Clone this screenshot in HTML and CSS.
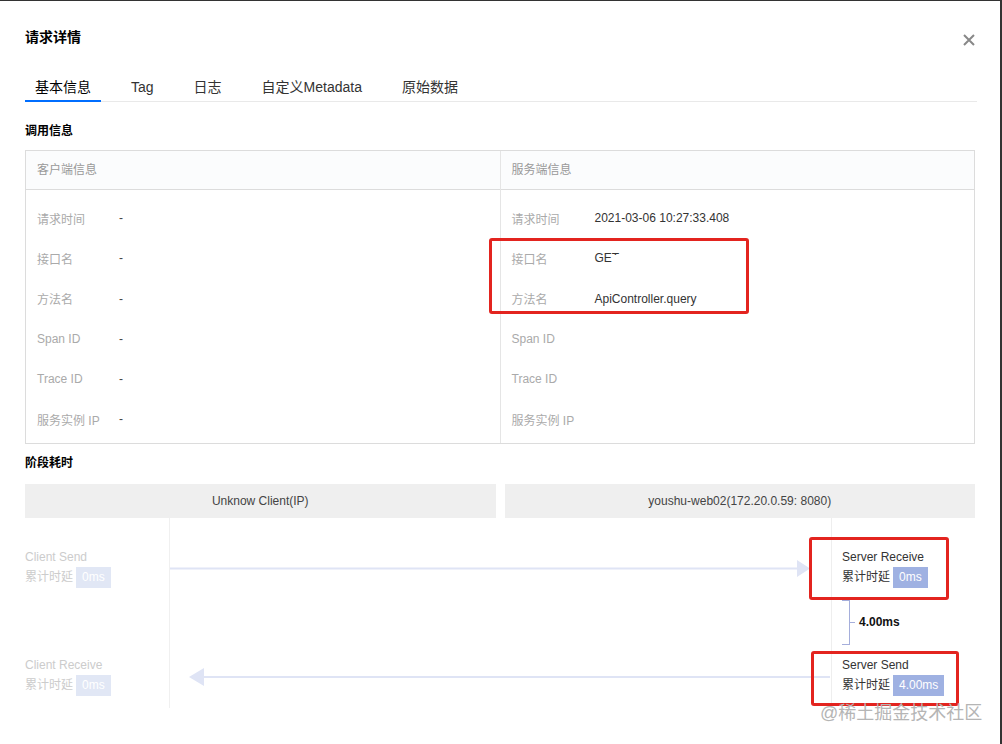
FILE: index.html
```html
<!DOCTYPE html>
<html lang="zh-CN">
<head>
<meta charset="UTF-8">
<meta name="viewport" content="width=device-width, initial-scale=1.0">
<title>请求详情</title>
<link rel="stylesheet" href="styles.css">
</head>
<body>
<div class="dialog">
  <div class="dialog_head">
    <h2 class="dialog_title">请求详情</h2>
    <a href="#" class="close" aria-label="关闭">
      <svg width="12" height="12" viewBox="0 0 12 12"><path d="M1 1 L11 11 M11 1 L1 11" stroke="#888" stroke-width="2" fill="none"/></svg>
    </a>
  </div>

  <ul class="tabs">
    <li class="on">基本信息</li>
    <li>Tag</li>
    <li>日志</li>
    <li>自定义Metadata</li>
    <li>原始数据</li>
  </ul>

  <h3 class="sub_title sub_first">调用信息</h3>
  <div class="info_table">
    <div class="info_col">
      <div class="info_head">客户端信息</div>
      <ul class="info_body">
        <li><span class="lbl">请求时间</span><span class="val">-</span></li>
        <li><span class="lbl">接口名</span><span class="val">-</span></li>
        <li><span class="lbl">方法名</span><span class="val">-</span></li>
        <li><span class="lbl">Span ID</span><span class="val">-</span></li>
        <li><span class="lbl">Trace ID</span><span class="val">-</span></li>
        <li><span class="lbl">服务实例 IP</span><span class="val">-</span></li>
      </ul>
    </div>
    <div class="info_col">
      <div class="info_head">服务端信息</div>
      <ul class="info_body">
        <li><span class="lbl">请求时间</span><span class="val">2021-03-06 10:27:33.408</span></li>
        <li><span class="lbl">接口名</span><span class="val">GET</span></li>
        <li><span class="lbl">方法名</span><span class="val">ApiController.query</span></li>
        <li><span class="lbl">Span ID</span><span class="val"></span></li>
        <li><span class="lbl">Trace ID</span><span class="val"></span></li>
        <li><span class="lbl">服务实例 IP</span><span class="val"></span></li>
      </ul>
    </div>
  </div>

  <h3 class="sub_title sub_second">阶段耗时</h3>
  <div class="stage_head">
    <div class="stage_bar">Unknow Client(IP)</div>
    <div class="stage_bar">youshu-web02(172.20.0.59: 8080)</div>
  </div>

  <div class="timeline">
    <div class="tl_side tl_client">
      <div class="evt">
        <p>Client Send</p>
        <p>累计时延<span class="badge">0ms</span></p>
      </div>
      <div class="evt evt_last">
        <p>Client Receive</p>
        <p>累计时延<span class="badge">0ms</span></p>
      </div>
    </div>
    <div class="tl_mid">
      <svg width="660" height="190" viewBox="0 0 660 190">
        <line x1="0" y1="50.5" x2="628" y2="50.5" stroke="#dfe4f5" stroke-width="2"/>
        <polygon points="627,42 640,50.5 627,59" fill="#dfe4f5"/>
        <line x1="34" y1="159" x2="660" y2="159" stroke="#dfe4f5" stroke-width="2"/>
        <polygon points="34,150 19,159 34,168" fill="#dfe4f5"/>
      </svg>
    </div>
    <div class="tl_side tl_server">
      <div class="evt">
        <p>Server Receive</p>
        <p>累计时延<span class="badge">0ms</span></p>
      </div>
      <div class="gap">
        <span class="bracket"></span>
        <b>4.00ms</b>
      </div>
      <div class="evt">
        <p>Server Send</p>
        <p>累计时延<span class="badge">4.00ms</span></p>
      </div>
    </div>
  </div>

  <!-- 标注框 -->
  <div class="mark mark_api"></div>
  <div class="mark mark_recv"></div>
  <div class="mark mark_send"></div>
  <div class="watermark">@稀土掘金技术社区</div>
</div>
</body>
</html>
```

FILE: styles.css
```css
* {
  margin: 0;
  padding: 0;
  box-sizing: border-box;
}
li {
  list-style: none;
}
body {
  background: #fff;
  font-family: "Liberation Sans", "Noto Sans CJK SC", sans-serif;
  font-size: 12px;
  color: #333;
}
.dialog {
  position: relative;
  width: 1002px;
  height: 744px;
  padding: 26px 25px 0 25px;
  border-top: 1px solid #333;
  border-right: 2px solid #333;
  overflow: hidden;
}
.dialog_head {
  display: flex;
  justify-content: space-between;
  align-items: center;
  height: 20px;
}
.dialog_title {
  font-size: 14px;
  line-height: 20px;
  font-weight: bold;
  color: #000;
}
.close {
  display: block;
  width: 12px;
  height: 12px;
  margin-top: 6px;
}
.close svg {
  display: block;
}

/* tabs */
.tabs {
  display: flex;
  margin-top: 30px;
  border-bottom: 1px solid #e9e9e9;
  width: 952px;
}
.tabs li {
  padding: 0 10px 3px;
  margin-right: 20px;
  margin-bottom: -1px;
  font-size: 14px;
  line-height: 20px;
  color: #333;
  border-bottom: 2px solid transparent;
}
.tabs li.on {
  color: #000;
  border-bottom-color: #006eff;
}

.sub_title {
  font-size: 12px;
  line-height: 20px;
  font-weight: bold;
  color: #000;
}
.sub_first {
  margin-top: 19px;
}
.sub_second {
  margin-top: 9px;
}

/* info table */
.info_table {
  display: flex;
  margin-top: 9px;
  border: 1px solid #dcdcdc;
}
.info_col {
  flex: 1;
}
.info_col + .info_col {
  border-left: 1px solid #e5e5e5;
}
.info_head {
  height: 39px;
  line-height: 39px;
  padding-left: 11px;
  color: #999;
  background: #fbfcfd;
  border-bottom: 1px solid #dcdcdc;
}
.info_body {
  padding: 8px 0 3px 11px;
}
.info_body li {
  display: flex;
  height: 40.25px;
  align-items: center;
}
.info_body .lbl {
  width: 82px;
  color: #aaa;
}
.info_col + .info_col .lbl {
  width: 83px;
}
.info_body .val {
  color: #333;
}
.info_col:first-child .val {
  color: #444;
}

/* stage */
.stage_head {
  display: flex;
  gap: 9px;
  margin-top: 11px;
}
.stage_bar {
  flex: 1;
  height: 34px;
  line-height: 34px;
  text-align: center;
  background: #efefef;
  color: #444;
}
.timeline {
  display: grid;
  grid-template-columns: 145px 1fr 144px;
  height: 190px;
}
.tl_side {
  padding-top: 29px;
}
.tl_client {
  border-right: 1px solid #f0f0f0;
  color: #ccc;
}
.tl_server {
  border-left: 1px solid #eeeeee;
  padding-left: 10px;
  color: #333;
}
.tl_mid svg {
  display: block;
}
.evt p {
  line-height: 20px;
}
.evt p + p {
  display: flex;
  align-items: center;
  height: 21px;
}
.evt_last {
  margin-top: 67px;
}
.badge {
  display: inline-block;
  height: 21px;
  line-height: 21px;
  padding: 0 6px;
  margin-left: 3px;
  color: #fff;
  background: #9fb1e2;
}
.tl_client .badge {
  background: #e1e7f5;
}
.gap {
  display: flex;
  align-items: center;
  height: 67px;
  padding-top: 2px;
}
.bracket {
  position: relative;
  width: 8px;
  height: 45px;
  border: 1px solid #a5aedb;
  border-left: 0;
}
.bracket::after {
  content: "";
  position: absolute;
  right: -6px;
  top: 21px;
  width: 5px;
  border-top: 1px solid #a5aedb;
}
.gap b {
  margin-left: 9px;
  color: #111;
}

/* 标注 */
.mark {
  position: absolute;
  border: 3px solid #e3241f;
  border-radius: 3px;
}
.mark_api {
  left: 489px;
  top: 237px;
  width: 260px;
  height: 76px;
}
.mark_api::after {
  /* 截图里 GET 的 T 被遮住了一半 */
  content: "";
  position: absolute;
  left: 122px;
  top: 14px;
  width: 8px;
  height: 14px;
  background: #fff;
}
.mark_recv {
  left: 809px;
  top: 536px;
  width: 140px;
  height: 63px;
}
.mark_send {
  left: 811px;
  top: 650px;
  width: 148px;
  height: 55px;
}
.watermark {
  position: absolute;
  left: 820px;
  top: 700px;
  font-size: 18px;
  line-height: 24px;
  color: #b5b5b5;
}
```
